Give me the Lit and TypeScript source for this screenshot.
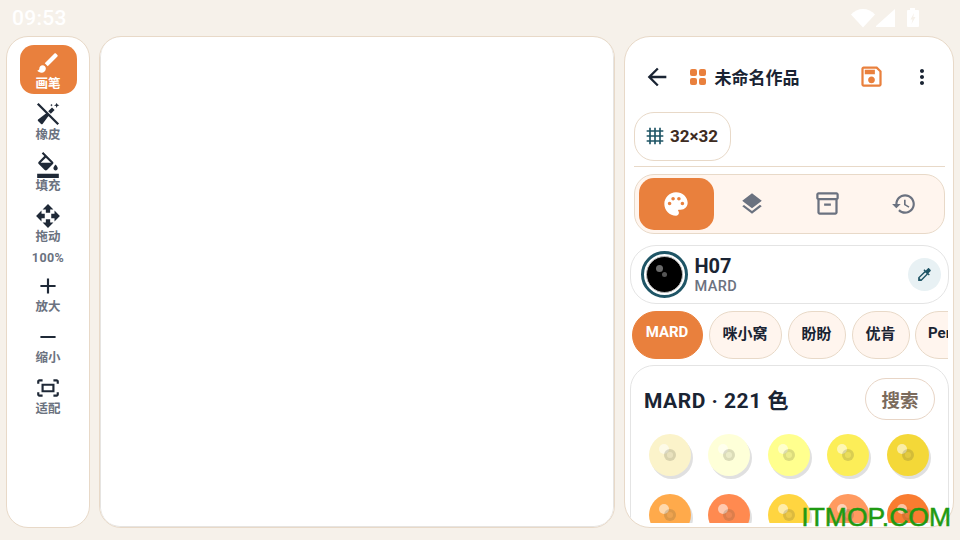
import { LitElement, html, css, svg } from "lit";
import { customElement } from "lit/decorators.js";

const P: Record<string, string> = {
  brush: "M7 14c-1.66 0-3 1.34-3 3 0 1.31-1.16 2-2 2 .92 1.22 2.49 2 4 2 2.21 0 4-1.79 4-4 0-1.66-1.34-3-3-3zm13.71-9.37l-1.34-1.34c-.39-.39-1.02-.39-1.41 0L9 12.25 11.75 15l8.96-8.96c.39-.39.39-1.02 0-1.41z",
  fill: "M16.56 8.94L7.62 0 6.21 1.41l2.38 2.38-5.15 5.15c-.59.59-.59 1.54 0 2.12l5.5 5.5c.29.29.68.44 1.06.44s.77-.15 1.06-.44l5.5-5.5c.59-.58.59-1.53 0-2.12zM5.21 10L10 5.21 14.79 10H5.21zM19 11.5s-2 2.17-2 3.5c0 1.1.9 2 2 2s2-.9 2-2c0-1.33-2-3.5-2-3.5zM2 20h20v4H2v-4z",
  move: "M10 9h4V6h3l-5-5-5 5h3v3zm-1 1H6V7l-5 5 5 5v-3h3v-4zm14 2l-5-5v3h-3v4h3v3l5-5zm-9 3h-4v3H7l5 5 5-5h-3v-3z",
  add: "M19 13h-6v6h-2v-6H5v-2h6V5h2v6h6v2z",
  remove: "M19 13H5v-2h14v2z",
  fit: "M17 4h3c1.1 0 2 .9 2 2v2h-2V6h-3V4zM4 8V6h3V4H4c-1.1 0-2 .9-2 2v2h2zm16 8v2h-3v2h3c1.1 0 2-.9 2-2v-2h-2zM7 18H4v-2H2v2c0 1.1.9 2 2 2h3v-2zM18 8H6v8h12V8zm-2 6H8v-4h8v4z",
  back: "M20 11H7.83l5.59-5.59L12 4l-8 8 8 8 1.41-1.41L7.83 13H20v-2z",
  more: "M12 8c1.1 0 2-.9 2-2s-.9-2-2-2-2 .9-2 2 .9 2 2 2zm0 2c-1.1 0-2 .9-2 2s.9 2 2 2 2-.9 2-2-.9-2-2-2zm0 6c-1.1 0-2 .9-2 2s.9 2 2 2 2-.9 2-2-.9-2-2-2z",
  save: "M17 3H5c-1.11 0-2 .9-2 2v14c0 1.1.89 2 2 2h14c1.1 0 2-.9 2-2V7l-4-4zm2 16H5V5h11.17L19 7.83V19zm-7-7c-1.66 0-3 1.34-3 3s1.34 3 3 3 3-1.34 3-3-1.34-3-3-3zM6 6h9v4H6z",
  grid: "M22 7V5h-3V2h-2v3h-4V2h-2v3H7V2H5v3H2v2h3v4H2v2h3v4H2v2h3v3h2v-3h4v3h2v-3h4v3h2v-3h3v-2h-3v-4h3v-2h-3V7h3zM7 7h4v4H7V7zm0 10v-4h4v4H7zm10 0h-4v-4h4v4zm0-6h-4V7h4v4z",
  palette: "M12 2C6.49 2 2 6.49 2 12s4.49 10 10 10c1.38 0 2.5-1.12 2.5-2.5 0-.61-.23-1.2-.64-1.67-.08-.1-.13-.21-.13-.33 0-.28.22-.5.5-.5H16c3.31 0 6-2.69 6-6 0-4.96-4.49-9-10-9zm5.5 11c-.83 0-1.5-.67-1.5-1.5s.67-1.5 1.5-1.5 1.5.67 1.5 1.5-.67 1.5-1.5 1.5zm-3-4c-.83 0-1.5-.67-1.5-1.5S13.67 6 14.5 6s1.5.67 1.5 1.5S15.33 9 14.5 9zM5 11.5c0-.83.67-1.5 1.5-1.5s1.5.67 1.5 1.5S7.33 13 6.5 13 5 12.33 5 11.5zm6-4c0 .83-.67 1.5-1.5 1.5S8 8.33 8 7.5 8.67 6 9.5 6s1.5.67 1.5 1.5z",
  layers: "M11.99 18.54l-7.37-5.73L3 14.07l9 7 9-7-1.63-1.27-7.38 5.74zM12 16l7.36-5.73L21 9l-9-7-9 7 1.63 1.27L12 16z",
  archive: "M20 2H4c-1 0-2 .9-2 2v3.01c0 .72.43 1.34 1 1.69V20c0 1.1 1.1 2 2 2h14c.9 0 2-.9 2-2V8.7c.57-.35 1-.97 1-1.69V4c0-1.1-1-2-2-2zm-1 18H5V9h14v11zm1-13H4V4h16v3zM9 12h6v2H9z",
  history: "M13 3c-4.97 0-9 4.03-9 9H1l3.89 3.89.07.14L9 12H6c0-3.87 3.13-7 7-7s7 3.13 7 7-3.13 7-7 7c-1.93 0-3.68-.79-4.94-2.06l-1.42 1.42C8.27 19.99 10.51 21 13 21c4.97 0 9-4.03 9-9s-4.03-9-9-9zm-1 5v5l4.28 2.54.72-1.21-3.5-2.08V8H12z",
  dropper: "M20.71 5.63l-2.34-2.34c-.39-.39-1.02-.39-1.41 0l-3.12 3.12-1.93-1.91-1.41 1.41 1.42 1.42L3 16.25V21h4.75l8.92-8.92 1.42 1.42 1.41-1.41-1.92-1.92 3.12-3.12c.4-.4.4-1.03.01-1.42zM6.92 19L5 17.08l8.06-8.06 1.92 1.92L6.92 19z",
  eraser: "M3.300 1.800 22.200 20.700 20.700 22.200 1.800 3.300zM10.400 11.400 12.600 13.600 7 21.200c-.4.4-1 .4-1.400 0L2.800 18.400c-.4-.4-.4-1 0-1.400zM15.700 5.900l2.400 2.400-3.500 3.500-2.400-2.400zM20 1.500l.7 1.800 1.800.7-1.800.7-.7 1.800-.7-1.800-1.800-.7 1.800-.7zM15.200 2.500l.4.9.9.4-.9.4-.4.9-.4-.9-.9-.4.9-.4z",
};

const ico = (name: string, size: number, cls = "") => html`<svg class=${cls} width=${size} height=${size} viewBox="0 0 24 24" fill="currentColor">${svg`<path d=${P[name]}></path>`}</svg>`;

const TOP = [
  { i: "brush", l: "画笔", on: true },
  { i: "eraser", l: "橡皮" },
  { i: "fill", l: "填充" },
  { i: "move", l: "拖动" },
];
const BOTTOM = [
  { i: "add", l: "放大" },
  { i: "remove", l: "缩小" },
  { i: "fit", l: "适配" },
];
const BEADS = ["#fbf3ca", "#feffd8", "#ffff8e", "#fcee58", "#f4d838", "#ffaa4b", "#ff8a50", "#ffd540", "#ff9a60", "#f97c30"];

@customElement("app-root")
export class AppRoot extends LitElement {
  static styles = css`
    :host {
      display: flex; flex-direction: column; width: 960px; height: 540px; overflow: hidden; position: relative;
      background: #f6f1ea; color: #1a2433;
      font-family: Roboto, "Noto Sans CJK SC", sans-serif;
    }
    svg { display: block; flex: none; }
    .status { height: 36px; flex: none; display: flex; align-items: center; padding-left: 12px; color: #fff; font-size: 21px; font-weight: 500; letter-spacing: .3px; }
    .status .time { flex: 1; }
    .status .sys { display: flex; align-items: center; margin-right: 40px; }
    .main { flex: 1; min-height: 0; display: flex; gap: 9px; padding: 0 6px 12px; }
    .panel { background: #fff; border: 1.5px solid #e8d9c8; box-sizing: border-box; overflow: hidden; }
    .rail { width: 84px; border-radius: 22px; display: flex; flex-direction: column; align-items: center; gap: 2px; padding-top: 7.5px; }
    .tool { width: 57px; height: 49px; box-sizing: border-box; padding-top: 5px; border-radius: 14px; display: flex; flex-direction: column; align-items: center; color: #1f2937; flex: none; }
    .tool .lab { font-size: 12.5px; line-height: 14px; font-weight: 700; color: #6b7280; margin-top: 1px; }
    .tool.on { background: #e9803d; color: #fff; }
    .tool.on .lab { color: #fff; }
    .zoom { font-size: 12.5px; line-height: 17px; font-weight: 700; color: #6b7280; letter-spacing: .4px; }
    .canvas { flex: 1; border-radius: 22px; display: flex; }
    .paper { flex: 1; border-radius: 20px; border: 1.5px solid #e6e4e1; border-width: 0 1.5px 1.5px 1.5px; }
    .side { width: 330px; flex: none; border-radius: 26px; padding: 14.5px 4.5px 4px; display: flex; flex-direction: column; }
    .head { height: 50px; flex: none; margin: 0 4px; display: flex; align-items: center; padding: 0 11px 0 9px; }
    .head .dots { margin-left: 19px; display: grid; grid-template-columns: 7px 7px; gap: 2px; }
    .head .dots i { width: 7px; height: 7px; border-radius: 2px; background: #e9803d; }
    .head .title { flex: 1; margin-left: 9px; font-size: 17px; font-weight: 700; color: #1a2433; }
    .head .save { color: #e9803d; margin-right: 25px; }
    .chip { align-self: flex-start; margin: 10px 4px 0; height: 49px; box-sizing: border-box; border: 1.5px solid #e8d9c8; border-radius: 20px; display: flex; align-items: center; gap: 5px; padding: 0 12px 0 10.5px; color: #1f5566; }
    .chip span { font-size: 17px; font-weight: 700; color: #3e2c22; }
    .rule { height: 1.5px; flex: none; margin: 5px 4px 0; background: #e8d9c8; }
    .tabs { height: 60px; flex: none; box-sizing: border-box; margin: 6.5px 4px 0; padding: 3px 2px 3px 4px; border: 1.5px solid #e8d9c8; border-radius: 20px; background: #fff5ee; display: flex; }
    .tab { flex: 1; display: flex; align-items: center; justify-content: center; border-radius: 15px; color: #6b7280; }
    .tab.on { background: #e9803d; color: #fff; }
    .pick { height: 59px; flex: none; box-sizing: border-box; margin-top: 11px; border: 1.5px solid #e4e4e4; border-radius: 26px; display: flex; align-items: center; padding: 0 7px 0 10px; }
    .swatch { width: 47px; height: 47px; box-sizing: border-box; border: 3.5px solid #1f5566; border-radius: 50%; background: #fff; display: flex; align-items: center; justify-content: center; flex: none; }
    .swatch .in { width: 37px; height: 37px; box-sizing: border-box; border-radius: 50%; background: #000; border: 1px solid #bbb; position: relative; }
    .swatch .in::before { content: ""; position: absolute; left: 9px; top: 8px; width: 7px; height: 7px; border-radius: 50%; background: #6a6a6a; }
    .swatch .in::after { content: ""; position: absolute; left: 15px; top: 15px; width: 5px; height: 5px; border-radius: 50%; background: #555; }
    .names { flex: 1; margin-left: 7px; padding-top: 1px; display: flex; flex-direction: column; }
    .names b { font-size: 20px; line-height: 24px; font-weight: 700; color: #1a2433; }
    .names span { font-size: 14.5px; line-height: 17px; font-weight: 500; color: #6b7280; letter-spacing: .4px; }
    .drop { width: 33px; height: 33px; border-radius: 50%; background: #e8f1f4; color: #1f5566; display: flex; align-items: center; justify-content: center; }
    .brands { height: 48px; flex: none; margin: 7px 1px 0 0; padding-left: 2px; display: flex; gap: 6px; overflow: hidden; }
    .brand { height: 48px; box-sizing: border-box; flex: none; border-radius: 24px; border: 1.5px solid #e8d9c8; background: #fff5ee; font-size: 15px; font-weight: 700; color: #1a2433; display: flex; align-items: center; padding: 0 0 4px; justify-content: center; }
    .brand.on { background: #e9803d; border-color: #e9803d; color: #fff; padding-bottom: 6px; }
    .brand.cut { width: 70px; margin-left: -1px; justify-content: flex-start; padding-left: 12.5px; }
    .clip { flex: 1; min-height: 0; overflow: hidden; margin-top: 6px; }
    .card { height: 300px; box-sizing: border-box; border: 1.5px solid #e4e4e4; border-radius: 24px; padding: 12.5px 12.5px 0 12.500px; }
    .card-head { display: flex; align-items: center; justify-content: space-between; height: 42px; padding-left: 1px; }
    .card-head b { font-size: 21px; font-weight: 700; letter-spacing: .5px; color: #1a2433; }
    .search { width: 70px; height: 42px; box-sizing: border-box; border: 1.5px solid #e8d5c6; border-radius: 21px; display: flex; align-items: center; justify-content: center; font-size: 18.5px; font-weight: 700; color: #7a6a5c; }
    .beads { display: grid; grid-template-columns: repeat(5, 59.5px); row-gap: 18px; margin: 14px 0 0 -3px; }
    .bead { justify-self: center; width: 42px; height: 42px; border-radius: 50%; position: relative; box-shadow: 2px 3px 0 rgba(0,0,0,.12); }
    .bead::before { content: ""; position: absolute; left: 10px; top: 10px; width: 10px; height: 10px; border-radius: 50%; background: rgba(255,255,255,.55); filter: blur(.5px); }
    .bead::after { content: ""; position: absolute; left: 15px; top: 15px; width: 12px; height: 12px; box-sizing: border-box; border-radius: 50%; background: rgba(120,120,110,.14) padding-box; border: 3px solid rgba(80,80,60,.2); }
    .mark { position: absolute; right: 9px; top: 501.500px; font-family: "Liberation Sans", Arial, sans-serif; font-size: 26.500px; line-height: 30px; color: #1f9a12; -webkit-text-stroke: .5px #1f9a12; }
  `;

  render() {
    const tool = (t: { i: string; l: string; on?: boolean }) => html`<div class="tool ${t.on ? "on" : ""}">${ico(t.i, 26)}<span class="lab">${t.l}</span></div>`;
    return html`
      <div class="status">
        <span class="time">09:53</span>
        <div class="sys">
          <svg width="45" height="20" viewBox="0 0 45 20" fill="#fff">
            <path d="M0 6.500C3 3 7.500 1 12 1s9 2 12 5.500L12 19.500z"></path>
            <path d="M25 19V18L44 1v18z"></path>
          </svg>
          <svg style="margin-left:10px" width="14" height="20" viewBox="0 0 14 20" fill="#fff">
            <path fill-rule="evenodd" d="M4 0h5v2h3a1 1 0 0 1 1 1v15a1 1 0 0 1-1 1H2a1 1 0 0 1-1-1V3a1 1 0 0 1 1-1h2zM8 5 4.500 11.500H6.500L5.500 16 9.500 9H7.300z"></path>
          </svg>
        </div>
      </div>
      <div class="main">
        <div class="panel rail">
          ${TOP.map(tool)}
          <div class="zoom">100%</div>
          ${BOTTOM.map(tool)}
        </div>
        <div class="panel canvas"><div class="paper"></div></div>
        <div class="panel side">
          <div class="head">
            ${ico("back", 28)}
            <div class="dots"><i></i><i></i><i></i><i></i></div>
            <div class="title">未命名作品</div>
            ${ico("save", 27, "save")}
            ${ico("more", 24)}
          </div>
          <div class="chip">${ico("grid", 20)}<span>32×32</span></div>
          <div class="rule"></div>
          <div class="tabs">
            <div class="tab on">${ico("palette", 28)}</div>
            <div class="tab">${ico("layers", 26)}</div>
            <div class="tab">${ico("archive", 27)}</div>
            <div class="tab">${ico("history", 26)}</div>
          </div>
          <div class="pick">
            <div class="swatch"><div class="in"></div></div>
            <div class="names"><b>H07</b><span>MARD</span></div>
            <div class="drop">${ico("dropper", 17)}</div>
          </div>
          <div class="brands">
            <div class="brand on" style="width:71px">MARD</div>
            <div class="brand" style="width:73px">咪小窝</div>
            <div class="brand" style="width:58px">盼盼</div>
            <div class="brand" style="width:58px">优肯</div>
            <div class="brand cut">Perler</div>
          </div>
          <div class="clip">
            <div class="card">
              <div class="card-head"><b>MARD · 221 色</b><div class="search">搜索</div></div>
              <div class="beads">
                ${BEADS.map((c) => html`<div class="bead" style="background:${c}"></div>`)}
              </div>
            </div>
          </div>
        </div>
      </div>
      <div class="mark">ITMOP.COM</div>
    `;
  }
}
